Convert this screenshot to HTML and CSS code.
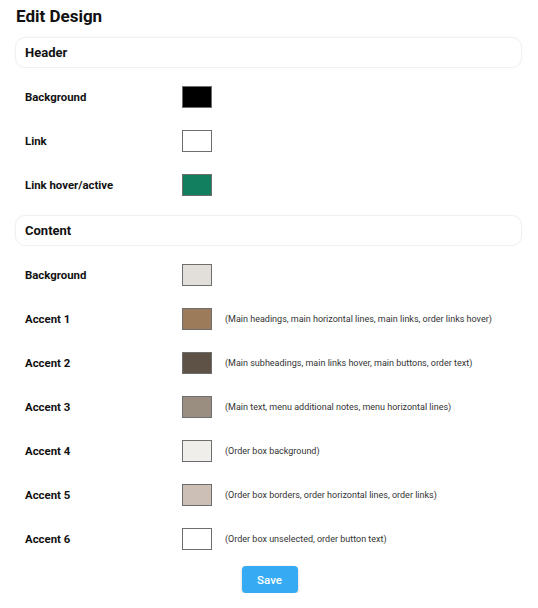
FILE: index.html
```html
<!DOCTYPE html>
<html>
<head>
<meta charset="utf-8">
<link rel="stylesheet" href="styles.css">
</head>
<body>
<div class="page">
  <h1 class="title">Edit Design</h1>
  <div class="section-card">Header</div>
  <div class="rows">
    <div class="row"><span class="label">Background</span><span class="swatch" style="background:#000000"></span></div>
    <div class="row"><span class="label">Link</span><span class="swatch" style="background:#ffffff"></span></div>
    <div class="row"><span class="label">Link hover/active</span><span class="swatch" style="background:#12805f"></span></div>
  </div>
  <div class="section-card">Content</div>
  <div class="rows last">
    <div class="row"><span class="label">Background</span><span class="swatch" style="background:#e2dfdb"></span></div>
    <div class="row"><span class="label">Accent 1</span><span class="swatch" style="background:#9b7b59"></span><span class="desc">(Main headings, main horizontal lines, main links, order links hover)</span></div>
    <div class="row"><span class="label">Accent 2</span><span class="swatch" style="background:#5e5246"></span><span class="desc">(Main subheadings, main links hover, main buttons, order text)</span></div>
    <div class="row"><span class="label">Accent 3</span><span class="swatch" style="background:#9a8e80"></span><span class="desc">(Main text, menu additional notes, menu horizontal lines)</span></div>
    <div class="row"><span class="label">Accent 4</span><span class="swatch" style="background:#efeeea"></span><span class="desc">(Order box background)</span></div>
    <div class="row"><span class="label">Accent 5</span><span class="swatch" style="background:#cbbfb6"></span><span class="desc">(Order box borders, order horizontal lines, order links)</span></div>
    <div class="row"><span class="label">Accent 6</span><span class="swatch" style="background:#ffffff"></span><span class="desc">(Order box unselected, order button text)</span></div>
  </div>
  <div class="actions"><button class="save">Save</button></div>
</div>
</body>
</html>
```

FILE: styles.css
```css
html, body {
  margin: 0;
  padding: 0;
  background: #ffffff;
}
body {
  font-family: Roboto, "Noto Sans", "Liberation Sans", sans-serif;
  color: #111111;
}
.page {
  padding: 0 16px 0 15px;
}
.title {
  margin: 0;
  padding: 5px 0 0 1px;
  height: 37px;
  box-sizing: border-box;
  font-size: 17px;
  font-weight: 700;
  line-height: 22px;
}
.section-card {
  height: 31px;
  box-sizing: border-box;
  border: 1px solid #f0f0f0;
  border-radius: 10px;
  box-shadow: 0 0 2px rgba(0,0,0,0.04);
  padding: 0 9px;
  display: flex;
  align-items: center;
  font-size: 13px;
  font-weight: 700;
}
.rows {
  padding: 7px 0 8px 0;
}
.rows.last {
  padding-bottom: 5px;
}
.row {
  height: 44px;
  display: flex;
  align-items: center;
}
.label {
  width: 167px;
  padding-left: 10px;
  box-sizing: border-box;
  font-size: 11.4px;
  font-weight: 700;
}
.swatch {
  width: 30px;
  height: 22px;
  box-sizing: border-box;
  border: 1px solid #6e6e6e;
  flex: none;
}
.desc {
  margin-left: 13px;
  font-size: 9px;
  color: #333333;
}
.actions {
  display: flex;
  justify-content: center;
  padding-left: 2px;
}
.save {
  width: 56px;
  height: 27px;
  border: none;
  border-radius: 4px;
  background: #36abf3;
  color: #ffffff;
  font-family: Roboto, "Noto Sans", sans-serif;
  font-size: 11.5px;
  font-weight: 500;
  box-shadow: 0 1px 3px rgba(0,0,0,0.2);
}
```
